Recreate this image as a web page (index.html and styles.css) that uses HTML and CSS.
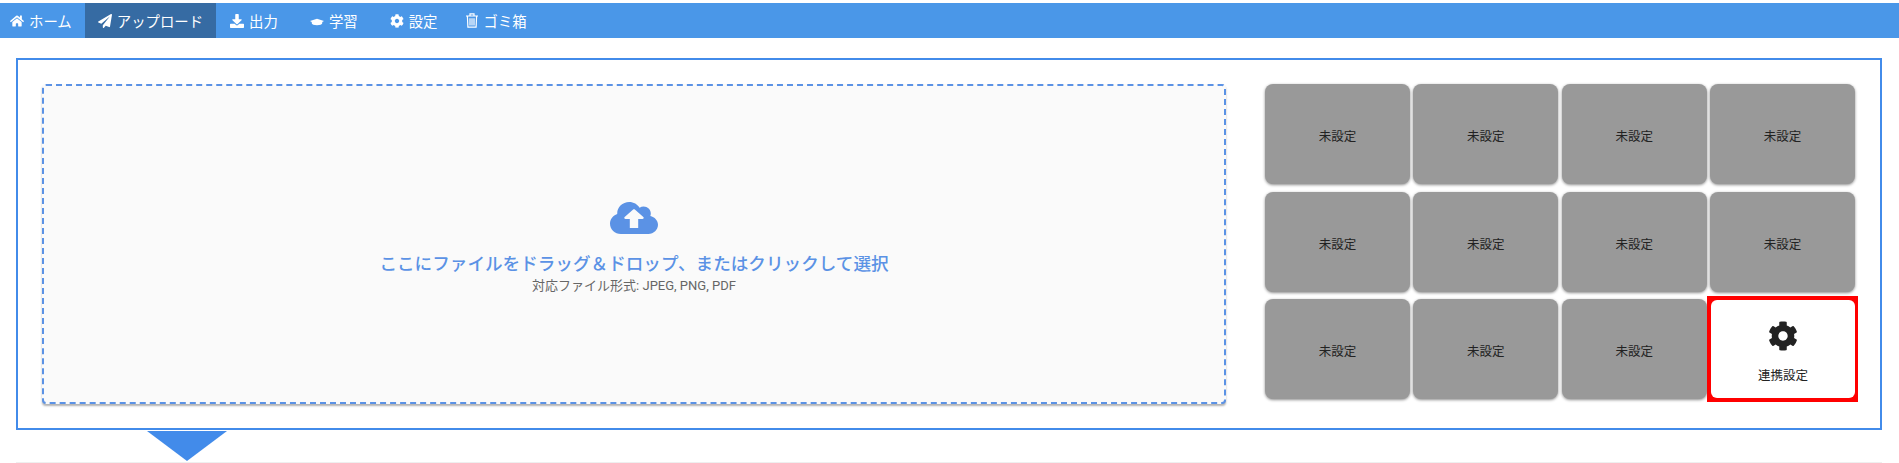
FILE: index.html
```html
<!DOCTYPE html>
<html lang="ja">
<head>
  <meta charset="utf-8">
  <title>アップロード</title>
  <link rel="stylesheet" href="styles.css">
</head>
<body>
  <svg class="defs" aria-hidden="true">
    <symbol id="i-cog" viewBox="0 0 512 512"><path d="M487.4 315.7l-42.6-24.6c4.3-23.2 4.3-47 0-70.2l42.6-24.6c4.9-2.8 7.1-8.6 5.5-14-11.1-35.6-30-67.8-54.7-94.6-3.8-4.1-10-5.1-14.8-2.3L380.8 110c-17.9-15.4-38.5-27.3-60.8-35.1V25.8c0-5.6-3.9-10.5-9.4-11.7-36.7-8.2-74.3-7.8-109.2 0-5.5 1.2-9.4 6.1-9.4 11.7V75c-22.2 7.9-42.8 19.8-60.8 35.1L88.7 85.5c-4.9-2.8-11-1.9-14.8 2.3-24.7 26.7-43.6 58.9-54.7 94.6-1.7 5.4.6 11.2 5.5 14L67.3 221c-4.3 23.2-4.3 47 0 70.2l-42.6 24.6c-4.9 2.8-7.1 8.6-5.5 14 11.1 35.6 30 67.8 54.7 94.6 3.8 4.1 10 5.1 14.8 2.3l42.6-24.6c17.9 15.4 38.5 27.3 60.8 35.1v49.2c0 5.6 3.9 10.5 9.4 11.7 36.7 8.2 74.3 7.8 109.2 0 5.5-1.2 9.4-6.1 9.4-11.7v-49.2c22.2-7.9 42.8-19.8 60.8-35.1l42.6 24.6c4.9 2.8 11 1.9 14.8-2.3 24.7-26.7 43.6-58.9 54.7-94.6 1.5-5.5-.7-11.3-5.6-14.1zM256 336c-44.1 0-80-35.9-80-80s35.9-80 80-80 80 35.9 80 80-35.9 80-80 80z"/></symbol>
  </svg>

  <nav class="nav">
    <a class="nav-item nav-home" href="#">
      <svg class="nav-icon" viewBox="0 0 576 512"><path d="M280.37 148.26L96 300.11V464a16 16 0 0 0 16 16l112.06-.29a16 16 0 0 0 15.92-16V368a16 16 0 0 1 16-16h64a16 16 0 0 1 16 16v95.64a16 16 0 0 0 16 16.05L464 480a16 16 0 0 0 16-16V300L295.67 148.26a12.19 12.19 0 0 0-15.3 0zM571.6 251.47L488 182.56V44.05a12 12 0 0 0-12-12h-56a12 12 0 0 0-12 12v72.61L318.47 43a48 48 0 0 0-61 0L4.34 251.47a12 12 0 0 0-1.6 16.9l25.5 31A12 12 0 0 0 45.15 301l235.22-193.74a12.19 12.19 0 0 1 15.3 0L530.9 301a12 12 0 0 0 16.9-1.6l25.5-31a12 12 0 0 0-1.7-16.93z"/></svg>
      ホーム
    </a>
    <a class="nav-item active" href="#">
      <svg class="nav-icon" viewBox="0 0 512 512"><path d="M476 3.2L12.5 270.6c-18.1 10.4-15.8 35.6 2.2 43.2L121 358.4l287.3-253.2c5.5-4.9 13.3 2.6 8.6 8.3L176 407v80.5c0 23.6 28.5 32.9 42.5 15.8L282 426l124.6 52.2c14.2 6 30.4-2.9 33-18.2l72-432C515 7.8 493.3-6.8 476 3.2z"/></svg>
      アップロード
    </a>
    <a class="nav-item nav-output" href="#">
      <svg class="nav-icon" viewBox="0 0 512 512"><path d="M216 0h80c13.3 0 24 10.7 24 24v168h87.7c17.8 0 26.7 21.5 14.1 34.1L269.7 378.3c-7.5 7.5-19.8 7.5-27.3 0L90.1 226.1c-12.6-12.6-3.7-34.1 14.1-34.1H192V24c0-13.3 10.7-24 24-24zm296 376v112c0 13.3-10.7 24-24 24H24c-13.3 0-24-10.7-24-24V376c0-13.3 10.7-24 24-24h146.7l49 49c20.1 20.1 52.5 20.1 72.6 0l49-49H488c13.3 0 24 10.7 24 24z"/></svg>
      出力
    </a>
    <a class="nav-item nav-study" href="#">
      <svg class="nav-icon" viewBox="0 0 640 512"><path d="M320 150L0 260l80 40v60c0 50 110 90 240 90s240-40 240-90v-60l80-40z"/></svg>
      学習
    </a>
    <a class="nav-item nav-settings" href="#">
      <svg class="nav-icon"><use href="#i-cog"/></svg>
      設定
    </a>
    <a class="nav-item nav-trash" href="#">
      <svg class="nav-icon icon-trash" viewBox="0 0 12 15"><path d="M0 3h12M4 2.6V.8h4v1.8M1.4 3.2l.5 11h8.2l.5-11M4 5.2v7.2M6 5.2v7.2M8 5.2v7.2" fill="none" stroke="currentColor" stroke-width="1.2"/></svg>
      ゴミ箱
    </a>
  </nav>

  <main class="upload-frame">
    <div class="dropzone">
      <svg class="cloud" viewBox="0 32 640 448" preserveAspectRatio="none"><path d="M537.6 226.6c4.1-10.7 6.4-22.4 6.4-34.6 0-53-43-96-96-96-19.7 0-38.1 6-53.3 16.2C367 64.2 315.3 32 256 32c-88.4 0-160 71.6-160 160 0 2.7.1 5.4.2 8.1C40.2 219.8 0 273.2 0 336c0 79.5 64.5 144 144 144h368c70.7 0 128-57.3 128-128 0-61.9-44-113.6-102.4-125.4zM433.4 270H376v126H264V270h-57.4c-14.3 0-21.4-17.2-11.3-27.3l113.4-105.4c6.2-6.2 16.4-6.2 22.6 0l113.4 105.4c10.1 10.1 2.9 27.3-11.3 27.3z"/></svg>
      <p class="drop-title">ここにファイルをドラッグ＆ドロップ、またはクリックして選択</p>
      <p class="drop-note">対応ファイル形式: JPEG, PNG, PDF</p>
    </div>

    <div class="tiles">
      <button class="tile">未設定</button>
      <button class="tile">未設定</button>
      <button class="tile">未設定</button>
      <button class="tile">未設定</button>
      <button class="tile">未設定</button>
      <button class="tile">未設定</button>
      <button class="tile">未設定</button>
      <button class="tile">未設定</button>
      <button class="tile">未設定</button>
      <button class="tile">未設定</button>
      <button class="tile">未設定</button>
      <button class="tile tile-link">
        <span class="tile-link-inner">
          <svg class="tile-cog"><use href="#i-cog"/></svg>
          連携設定
        </span>
      </button>
    </div>
  </main>

  <div class="flow-arrow"></div>
  <div class="next-panel"></div>
</body>
</html>
```

FILE: styles.css
```css
* {
  margin: 0;
  padding: 0;
  box-sizing: border-box;
}

html, body {
  height: 100%;
  overflow: hidden;
  background: white;
}

body {
  padding-top: 3px;
  font-family: Roboto, "Noto Sans CJK JP", sans-serif;
}

.defs {
  display: none;
}

.nav {
  display: flex;
  height: 35px;
  background: #4a97e8;
}

.nav-item {
  display: flex;
  align-items: center;
  gap: 5px;
  padding: 0 13px;
  color: white;
  font-size: 14.4px;
  text-decoration: none;
}

.nav-item.active {
  background: #366ba3;
}

.nav-home {
  padding-left: 10px;
}

.nav-output {
  margin-left: 1px;
}

.nav-study {
  margin-left: 6px;
}

.nav-settings {
  margin-left: 6px;
}

.nav-trash {
  margin-left: 2px;
}

.nav-icon {
  width: 14px;
  height: 14px;
  fill: currentColor;
}

.icon-trash {
  width: 12px;
  height: 15px;
  margin-right: 1px;
  fill: none;
}

.upload-frame {
  display: grid;
  grid-template-columns: 1fr 590px;
  gap: 39px;
  margin: 20px 17px 0 16px;
  height: 372px;
  padding: 24px 25px 24px 24px;
  border: 2px solid #428bea;
}

.dropzone {
  display: flex;
  flex-direction: column;
  align-items: center;
  justify-content: center;
  padding-top: 8px;
  background: #fafafa;
  border: 2px dashed #5b92e5;
  border-radius: 4px;
  box-shadow: 0 2px 2px rgba(0, 0, 0, 0.3);
}

.cloud {
  width: 48px;
  height: 32px;
  fill: #5b92e5;
}

.drop-title {
  margin-top: 20px;
  color: #5b92e5;
  font-size: 17.6px;
  font-weight: 500;
  line-height: 20px;
}

.drop-note {
  margin-top: 3px;
  color: #666;
  font-size: 13px;
  line-height: 18px;
}

.tiles {
  display: grid;
  grid-template-columns: repeat(4, 1fr);
  grid-auto-rows: 100px;
  gap: 7.5px 3.33px;
}

.tile {
  display: flex;
  flex-direction: column;
  align-items: center;
  justify-content: center;
  padding-top: 3px;
  background: #999;
  border: none;
  border-radius: 8px;
  box-shadow: 0 1px 3px rgba(0, 0, 0, 0.45);
  color: #222;
  font-family: inherit;
  font-size: 12.5px;
}

.tile-link {
  align-items: stretch;
  padding: 1px 0 1px 1px;
  background: #f00;
  border-radius: 0;
  box-shadow: none;
  outline: 3px solid #f00;
}

.tile-link-inner {
  flex: 1;
  display: flex;
  flex-direction: column;
  align-items: center;
  justify-content: center;
  gap: 14px;
  padding-top: 7px;
  background: white;
  border-radius: 6px;
}

.tile-cog {
  width: 30px;
  height: 30px;
  fill: #222;
}

.flow-arrow {
  width: 0;
  height: 0;
  margin: 1px 0 0 147px;
  border-top: 30px solid #428bea;
  border-left: 40px solid transparent;
  border-right: 40px solid transparent;
}

.next-panel {
  height: 1px;
  margin: 1px 17px 0 16px;
  background: #efefef;
}
```
